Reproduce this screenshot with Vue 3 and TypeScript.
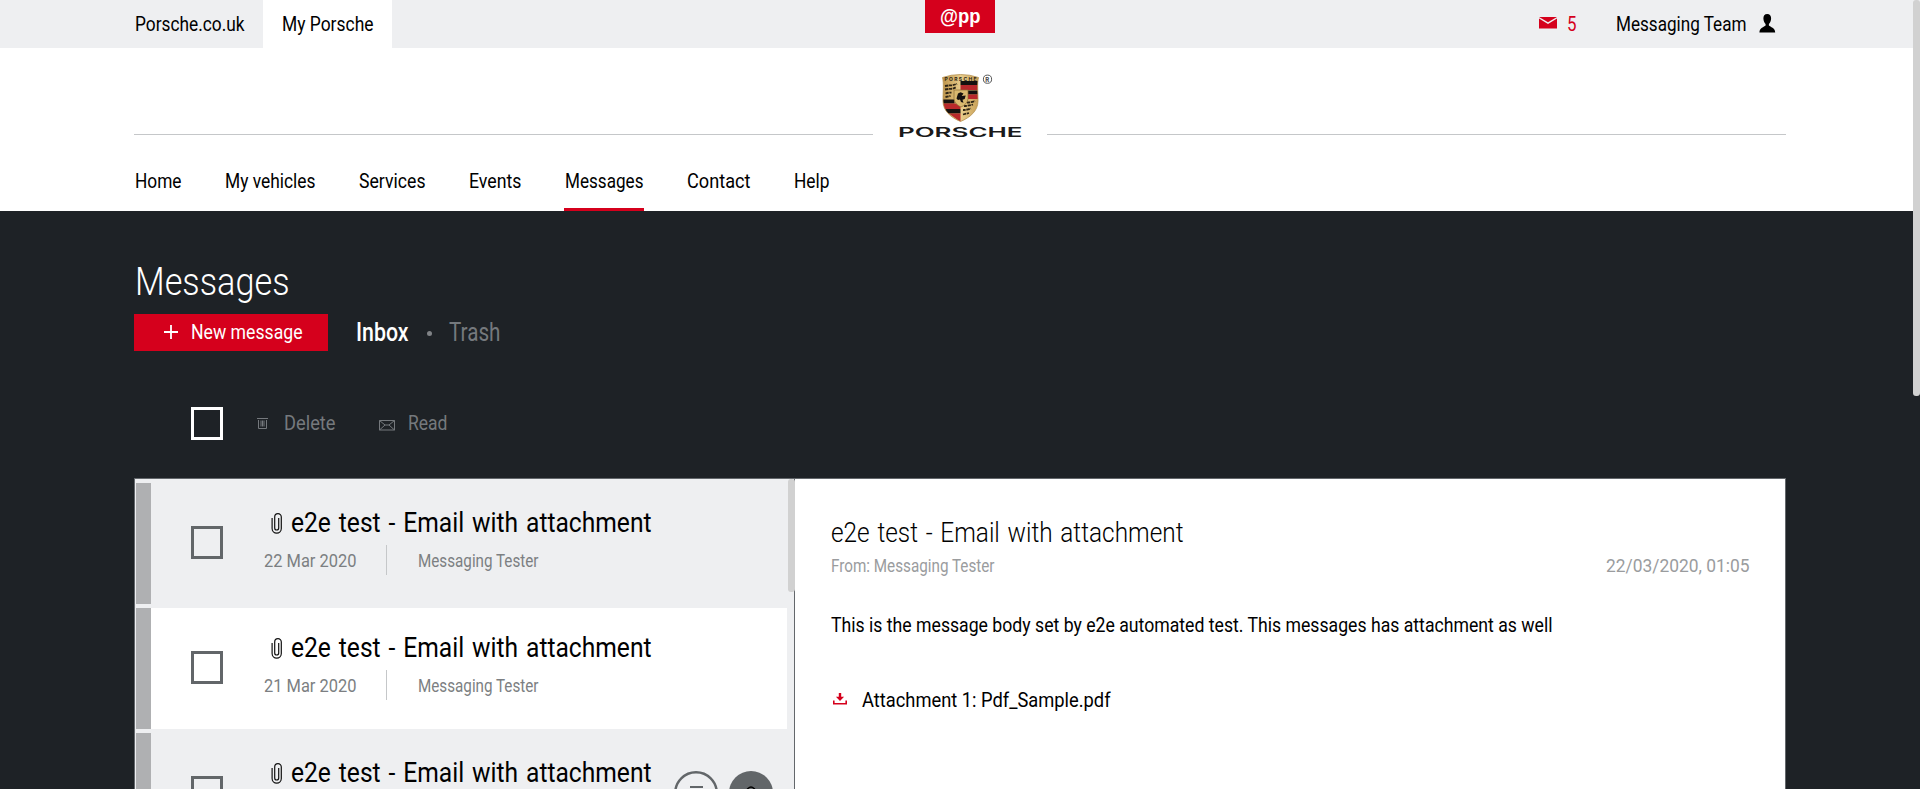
<script setup lang="ts">
import type { Directive } from 'vue'

interface NavItem {
  label: string
  width: number
  active?: boolean
}

interface Mail {
  id: number
  date: string
  unread: boolean
  actions: boolean
}

// Condenses a label horizontally so that it takes up the given width.
const vFit: Directive<HTMLElement, number> = {
  mounted(el, binding) {
    const natural = el.getBoundingClientRect().width
    if (!natural) return
    el.style.transform = `translateX(1px) scaleX(${(binding.value - 1.5) / natural})`
    el.style.marginRight = `${binding.value - natural}px`
  },
}

const nav: NavItem[] = [
  { label: 'Home', width: 48 },
  { label: 'My vehicles', width: 92 },
  { label: 'Services', width: 68 },
  { label: 'Events', width: 54 },
  { label: 'Messages', width: 80, active: true },
  { label: 'Contact', width: 65 },
  { label: 'Help', width: 37 },
]

const mails: Mail[] = [
  { id: 1, date: '22 Mar 2020', unread: false, actions: false },
  { id: 2, date: '21 Mar 2020', unread: true, actions: false },
  { id: 3, date: '20 Mar 2020', unread: false, actions: true },
]
</script>

<template>
  <div class="page">
    <div class="topbar">
      <div class="tab"><span v-fit="111" class="t">Porsche.co.uk</span></div>
      <div class="tab current"><span v-fit="93" class="t">My Porsche</span></div>
      <div class="app-tag"><span v-fit="42" class="t">@pp</span></div>
      <div class="account">
        <svg class="mail" width="18" height="12" viewBox="0 0 18 12">
          <path d="M0 0h18L9 5.200z" fill="#d5001c" />
          <path d="M0 1.600 9 6.900l9-5.300V11.400H0z" fill="#d5001c" />
        </svg>
        <span v-fit="11" class="t count">5</span>
        <span v-fit="132" class="t name">Messaging Team</span>
        <svg class="person" width="17" height="19" viewBox="0 0 17 19">
          <path d="M8.200 0C5.600 0 4.300 1.800 4.400 4.500c.1 2.600 1 4.300 2.200 5.400v1.600C5 13.300.6 13.300.4 18.400h15.800c-.2-5.100-4.700-5.100-6.300-6.900V9.900c1.200-1.100 2.100-2.800 2.200-5.400C12.200 1.800 10.800 0 8.200 0z" />
        </svg>
      </div>
    </div>

    <header class="header">
      <div class="brand-row">
        <div class="rule"></div>
        <div class="brand">
          <svg class="crest" width="52" height="50" viewBox="0 0 52 50">
            <defs>
              <linearGradient id="gold" x1="0" x2="1">
                <stop offset="0" stop-color="#b98f45" />
                <stop offset=".5" stop-color="#e8cd8c" />
                <stop offset="1" stop-color="#c49a50" />
              </linearGradient>
              <clipPath id="shield">
                <path d="M1.500 3.500Q10 .5 19.500.5T37.500 3.500C36 9 37 18 37 27 37 37 29 43.500 19.500 47.500 10 43.500 2 37 2 27 2 18 3 9 1.500 3.500z" />
              </clipPath>
            </defs>
            <g clip-path="url(#shield)">
              <rect width="40" height="50" fill="url(#gold)" />
              <path d="M19.500 7h18v4h-18zM27 16.500h10v4H27zM2 25.500h11.500v4H2zM4 35h15.500v4.500H5z" fill="#15110f" />
              <path d="M19.500 11h18v5h-18zM27 20.500h10v4.500H27zM2 29.500h14l3.500 3V35H3zM8 39.500h11.500V48z" fill="#b8282b" />
              <g fill="none" stroke="#2d2415" stroke-width="1.800" stroke-dasharray="3.200 .7">
                <path d="M4 12q3-.5 5-.7 3 .3 7-1.600M4 15.500q3-.5 5-.7 3 .3 6-1.600M4.500 19.500q3-1 6-.9M4.500 23l5-1" />
                <path d="M26 28.500q4 0 8-1.500M23 32q4 0 9-1.500M22 36q3 .2 8-1.500M22 40.500l6-1.500" />
              </g>
              <path d="M13 16h14v9q-1 5.500-7 8-6-2.500-7-8z" fill="#d9b970" stroke="#8b6a30" stroke-width=".7" />
              <path d="M15.500 24.500l1.500-5 2.500-1.300 3 1.300-1.800 2.500 4-.5-1 3.500-2.200.7 1 3-2.500-.7-1-2.500-2 .5z" fill="#15110f" />
            </g>
            <path d="M1.500 3.500Q10 .5 19.500.5T37.500 3.500C36 9 37 18 37 27 37 37 29 43.500 19.500 47.500 10 43.500 2 37 2 27 2 18 3 9 1.500 3.500z" fill="none" stroke="#b59252" stroke-width=".8" />
            <text x="3.500" y="6.900" textLength="32" class="crest-name">PORSCHE</text>
            <circle cx="46.500" cy="5.200" r="4.100" fill="none" stroke="#444" stroke-width=".9" />
            <text x="44.300" y="7.500" class="crest-reg">R</text>
          </svg>
          <div class="wordmark"><span v-fit="126" class="t">PORSCHE</span></div>
        </div>
        <div class="rule"></div>
      </div>
      <nav class="nav">
        <a v-for="item in nav" :key="item.label" class="nav-item" :class="{ active: item.active }">
          <span v-fit="item.width" class="t">{{ item.label }}</span>
        </a>
      </nav>
    </header>

    <main class="content">
      <h1 class="title"><span v-fit="156" class="t">Messages</span></h1>
      <div class="folder-row">
        <button class="new-message">
          <svg width="14" height="14" viewBox="0 0 14 14">
            <path d="M7 0v14M0 7h14" stroke="#fff" stroke-width="1.800" />
          </svg>
          <span v-fit="113" class="t">New message</span>
        </button>
        <span v-fit="54" class="t inbox">Inbox</span>
        <i class="dot"></i>
        <span v-fit="53" class="t trash">Trash</span>
      </div>
      <div class="tools">
        <span class="checkbox light"></span>
        <svg class="bin" width="11" height="12" viewBox="0 0 11 12">
          <path d="M0 .5h11M1.500 2v8.500h8V2M4 2.500v6M5.500 2.500v6M7 2.500v6" fill="none" stroke="#75797d" />
        </svg>
        <span v-fit="53" class="t">Delete</span>
        <svg class="envelope" width="16" height="11" viewBox="0 0 16 11">
          <path d="M.5.5h15v9.500H.5zM.5.5 6 5h4L15.500.5M.5 10 6 5M15.500 10 10 5" fill="none" stroke="#75797d" />
        </svg>
        <span v-fit="41" class="t">Read</span>
      </div>

      <section class="panel">
        <div class="list">
          <article v-for="mail in mails" :key="mail.id" class="row" :class="{ unread: mail.unread }">
            <span class="checkbox"></span>
            <div class="row-text">
              <div class="subject">
                <svg width="12" height="21" viewBox="0 0 12 21">
                  <path d="M1.100 5v10.500a4.600 4.600 0 0 0 9.200 0V4a3.300 3.300 0 0 0-6.600 0v11a2 2 0 0 0 4 0V5" fill="none" stroke="#111" stroke-width="1.200" />
                </svg>
                <span v-fit="362" class="t">e2e test - Email with attachment</span>
              </div>
              <div class="meta">
                <span v-fit="94" class="t">{{ mail.date }}</span>
                <i class="bar"></i>
                <span v-fit="122" class="t">Messaging Tester</span>
              </div>
            </div>
            <div v-if="mail.actions" class="actions">
              <svg width="44" height="44" viewBox="0 0 44 44">
                <circle cx="22" cy="22" r="20.800" fill="none" stroke="#626669" stroke-width="2.400" />
                <path d="M16 15.900h13M17.500 20v11h10V20" fill="none" stroke="#626669" stroke-width="2" />
              </svg>
              <svg width="44" height="44" viewBox="0 0 44 44">
                <circle cx="22" cy="22" r="22" fill="#626669" />
                <path d="M14 21q3-1 5-3.500 3-3 6 0 2 2.500 5 3.500v9H14z" fill="none" stroke="#000" stroke-width="1.500" stroke-linejoin="round" />
              </svg>
            </div>
          </article>
          <i class="list-thumb"></i>
        </div>

        <article class="reader">
          <h2 class="reader-title"><span v-fit="354" class="t">e2e test - Email with attachment</span></h2>
          <div class="reader-meta">
            <span v-fit="165" class="t">From: Messaging Tester</span>
            <span v-fit="145" class="t">22/03/2020, 01:05</span>
          </div>
          <p class="reader-body">
            <span v-fit="723" class="t">This is the message body set by e2e automated test. This messages has attachment as well</span>
          </p>
          <a class="attachment">
            <svg width="14" height="12" viewBox="0 0 14 12">
              <path d="M5.800 0h2.400v3.800h2.900L7 8 2.900 3.800h2.900z" fill="#d5001c" />
              <path d="M0 7.500h1.600v2.400h10.800V7.500H14v4H0z" fill="#d5001c" />
            </svg>
            <span v-fit="250" class="t">Attachment 1: Pdf_Sample.pdf</span>
          </a>
        </article>
      </section>
    </main>
    <i class="page-thumb"></i>
  </div>
</template>

<style>
html,
body {
  margin: 0;
  height: 100%;
  overflow: hidden;
}
</style>

<style scoped>
.page {
  position: relative;
  width: 1920px;
  height: 789px;
  overflow: hidden;
  display: flex;
  flex-direction: column;
  background: #1e2226;
  color: #000;
  font-family: Roboto, 'Liberation Sans', sans-serif;
  font-size: 19.5px;
  font-weight: 400;
  box-sizing: border-box;
}
.t {
  display: inline-block;
  flex: none;
  white-space: nowrap;
  transform-origin: 0 50%;
}
svg {
  display: block;
  flex: none;
}

.topbar {
  position: relative;
  flex: none;
  display: flex;
  height: 48px;
  line-height: 50px;
  padding: 0 134px;
  background: #eeeff1;
}
.tab.current {
  width: 129px;
  margin-left: 18px;
  padding-left: 18px;
  box-sizing: border-box;
  background: #fff;
}
.app-tag {
  position: absolute;
  left: 925px;
  top: 0;
  width: 70px;
  height: 33px;
  line-height: 33px;
  padding-left: 14px;
  box-sizing: border-box;
  background: #d5001c;
  color: #fff;
  font-family: 'Liberation Sans', sans-serif;
  font-size: 20px;
  font-weight: 700;
}
.account {
  display: flex;
  margin-left: auto;
  padding-right: 10px;
}
.mail {
  margin: 17px 9px 0 0;
}
.count {
  color: #d5001c;
}
.name {
  margin-left: 38px;
}
.person {
  margin: 14px 0 0 12px;
}

.header {
  flex: none;
  display: flex;
  flex-direction: column;
  height: 163px;
  padding: 0 134px;
  background: #fff;
}
.brand-row {
  display: flex;
  height: 92px;
}
.rule {
  flex: 1;
  height: 1px;
  margin-top: 86px;
  background: #c5c7c9;
}
.brand {
  width: 174px;
  display: flex;
  flex-direction: column;
}
.crest {
  margin: 26px 0 0 68px;
}
.wordmark {
  margin: 2px 0 0 24px;
  height: 12px;
  line-height: 12px;
  font-family: Inter, 'DejaVu Sans', sans-serif;
  font-size: 13px;
  font-weight: 600;
  color: #1a1a1a;
}
.crest-name {
  font: 700 5px Inter, sans-serif;
  fill: #2d2415;
}
.crest-reg {
  font: 700 6px Inter, sans-serif;
  fill: #444;
}
.nav {
  display: flex;
  flex: 1;
  gap: 42px;
}
.nav-item {
  box-sizing: border-box;
  line-height: 83px;
  height: 71px;
}
.nav-item.active {
  border-bottom: 3px solid #d5001c;
}

.content {
  padding: 0 134px;
}
.title {
  margin: 48px 0 0;
  height: 46px;
  line-height: 46px;
  font-size: 39px;
  font-weight: 300;
  color: #fff;
}
.folder-row {
  display: flex;
  align-items: center;
  height: 37px;
  margin-top: 9px;
}
.new-message {
  display: flex;
  align-items: center;
  width: 194px;
  height: 37px;
  padding: 0 0 0 30px;
  gap: 12px;
  border: 0;
  background: #d5001c;
  color: #fff;
  font: 450 19.500px/37px Roboto, sans-serif;
}
.new-message svg {
  margin-top: -2px;
}
.inbox,
.trash {
  font-size: 25px;
}
.inbox {
  margin-left: 27px;
  color: #fff;
  font-weight: 500;
}
.dot {
  width: 5px;
  height: 5px;
  margin: 2px 16px 0 18px;
  border-radius: 50%;
  background: #808386;
}
.trash {
  color: #75797d;
}
.tools {
  display: flex;
  align-items: center;
  height: 33px;
  margin-top: 56px;
  padding-left: 57px;
  color: #75797d;
}
.checkbox {
  box-sizing: border-box;
  flex: none;
  width: 32px;
  height: 33px;
  border: 3px solid #626669;
}
.checkbox.light {
  border-color: #fff;
}
.bin {
  margin: 0 15px 0 34px;
}
.envelope {
  margin: 4px 12px 0 43px;
}

.panel {
  display: flex;
  box-sizing: border-box;
  height: 500px;
  margin-top: 38px;
  border: 1px solid #63676b;
  background: #fff;
}
.list {
  position: relative;
  box-sizing: border-box;
  flex: none;
  width: 660px;
  padding: 4px 7px 0 1px;
  display: flex;
  flex-direction: column;
  gap: 4px;
  border-right: 1px solid #63676b;
  background: #eeeff1;
}
.row {
  box-sizing: border-box;
  flex: none;
  display: flex;
  height: 121px;
  padding: 0 14px 0 40px;
  border-left: 15px solid #afb0b2;
}
.row.unread {
  background: #fff;
}
.row .checkbox {
  margin: 43px 0 0;
}
.row-text {
  margin: 21px 0 0 41px;
}
.subject {
  display: flex;
  align-items: center;
  height: 38px;
  padding-left: 7px;
  gap: 7px;
  font-size: 27px;
  word-spacing: 2px;
}
.meta {
  display: flex;
  align-items: center;
  height: 30px;
  margin: 3px 0 0 -1px;
  font-size: 18px;
  color: #7c7f82;
}
.bar {
  width: 1px;
  height: 30px;
  margin: 0 30px 0 29px;
  background: #c5c7c9;
}
.actions {
  display: flex;
  gap: 11px;
  margin: 38px 0 0 auto;
}
.list-thumb {
  position: absolute;
  right: -1px;
  top: 0;
  width: 7px;
  height: 113px;
  border-radius: 3px;
  background: #d1d1d1;
}
.reader {
  flex: 1;
  padding: 36px 35px 0;
}
.reader-title {
  margin: 0;
  height: 36px;
  line-height: 36px;
  font-size: 28px;
  font-weight: 300;
  word-spacing: 2px;
}
.reader-meta {
  display: flex;
  justify-content: space-between;
  height: 30px;
  line-height: 30px;
  font-size: 18px;
  color: #9a9c9e;
}
.reader-body {
  margin: 30px 0 0;
  height: 30px;
  line-height: 30px;
}
.attachment {
  display: flex;
  align-items: center;
  height: 30px;
  margin-top: 44px;
  padding-left: 3px;
  gap: 14px;
}
.attachment svg {
  margin-top: -3px;
}
.page-thumb {
  position: absolute;
  right: 0;
  top: 0;
  width: 7px;
  height: 396px;
  border-radius: 3px;
  background: #d1d1d1;
}
</style>
